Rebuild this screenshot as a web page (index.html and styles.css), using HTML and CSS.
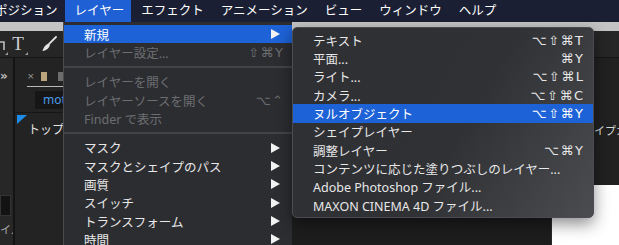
FILE: index.html
```html
<!DOCTYPE html>
<html lang="ja">
<head>
    <meta charset="UTF-8">
    <meta name="viewport" content="width=device-width, initial-scale=1.0">
    <title>レイヤー &gt; 新規</title>
    <link rel="stylesheet" href="styles.css">
</head>
<body>
    <div class="menubar">
        <span class="menubar-item first">コンポジション</span>
        <span class="menubar-item active">レイヤー</span>
        <span class="menubar-item">エフェクト</span>
        <span class="menubar-item">アニメーション</span>
        <span class="menubar-item">ビュー</span>
        <span class="menubar-item">ウィンドウ</span>
        <span class="menubar-item">ヘルプ</span>
    </div>

    <div class="app">
        <div class="titlebar"></div>

        <div class="toolbar">
            <span class="tool tool-edge grouped">
                <svg viewBox="0 0 16 16" width="16" height="16"><path d="M2 6 L14 6 L14 14" fill="none" stroke="#bdbdbd" stroke-width="1.6"/></svg>
            </span>
            <span class="tool tool-type grouped">T</span>
            <span class="tool tool-brush">
                <svg viewBox="0 0 16 16" width="16" height="16">
                    <path d="M15 1 L8.6 7.4" stroke="#e2e2e2" stroke-width="1.8" stroke-linecap="round"/>
                    <path d="M7.6 7.2 L9 8.6 C8.6 11.6 6 14.6 1.4 15 C2.2 13.4 3 9.4 7.6 7.2 Z" fill="#e2e2e2"/>
                </svg>
            </span>
        </div>

        <div class="workspace">
            <div class="dock">
                <span class="dock-more">»</span>
                <span class="dock-field"></span>
                <span class="dock-label">イ.</span>
            </div>

            <div class="project">
                <div class="project-tabs">
                    <span class="tab-close">×</span>
                    <span class="tab-swatch"></span>
                    <span class="tab-swatch other"></span>
                </div>
                <div class="project-search">
                    <span class="search-field">motion</span>
                </div>
                <div class="project-item">
                    <span class="item-mark"></span>
                    <span class="item-name">トップビュー</span>
                </div>
            </div>

            <div class="viewer"></div>

            <div class="side">
                <div class="side-panel"><span class="side-label">シェイプカラー</span></div>
                <div class="side-canvas"></div>
            </div>
        </div>
    </div>

    <!-- レイヤー menu -->
    <div class="menu layer-menu">
        <div class="item selected"><span class="label">新規</span><span class="arrow"></span></div>
        <div class="item disabled"><span class="label">レイヤー設定...</span><span class="keys">⇧⌘Y</span></div>
        <div class="sep"></div>
        <div class="item disabled"><span class="label">レイヤーを開く</span></div>
        <div class="item disabled"><span class="label">レイヤーソースを開く</span><span class="keys">⌥⌃</span></div>
        <div class="item disabled"><span class="label">Finder で表示</span></div>
        <div class="sep"></div>
        <div class="item"><span class="label">マスク</span><span class="arrow"></span></div>
        <div class="item"><span class="label">マスクとシェイプのパス</span><span class="arrow"></span></div>
        <div class="item"><span class="label">画質</span><span class="arrow"></span></div>
        <div class="item"><span class="label">スイッチ</span><span class="arrow"></span></div>
        <div class="item"><span class="label">トランスフォーム</span><span class="arrow"></span></div>
        <div class="item"><span class="label">時間</span><span class="arrow"></span></div>
    </div>

    <!-- 新規 submenu -->
    <div class="menu sub-menu">
        <div class="item"><span class="label">テキスト</span><span class="keys">⌥⇧⌘T</span></div>
        <div class="item"><span class="label">平面...</span><span class="keys">⌘Y</span></div>
        <div class="item"><span class="label">ライト...</span><span class="keys">⌥⇧⌘L</span></div>
        <div class="item"><span class="label">カメラ...</span><span class="keys">⌥⇧⌘C</span></div>
        <div class="item selected"><span class="label">ヌルオブジェクト</span><span class="keys">⌥⇧⌘Y</span></div>
        <div class="item"><span class="label">シェイプレイヤー</span></div>
        <div class="item"><span class="label">調整レイヤー</span><span class="keys">⌥⌘Y</span></div>
        <div class="item"><span class="label">コンテンツに応じた塗りつぶしのレイヤー...</span></div>
        <div class="item"><span class="label">Adobe Photoshop ファイル...</span></div>
        <div class="item"><span class="label">MAXON CINEMA 4D ファイル...</span></div>
    </div>
</body>
</html>
```

FILE: styles.css
```css
* {
    box-sizing: border-box;
}
body {
    margin: 0;
    width: 619px;
    height: 245px;
    overflow: hidden;
    background-color: #1e1e1e;
    font-family: "Noto Sans", "Noto Sans CJK JP", sans-serif;
    font-size: 12.5px;
    color: #e8e8e8;
}

/* system menu bar */
.menubar {
    display: flex;
    height: 22px;
    line-height: 22px;
    background-color: #1b1f33;
    color: #fff;
    white-space: nowrap;
    overflow: hidden;
}
.menubar-item {
    padding: 0 7px 0 10px;
}
.menubar-item.first {
    margin-left: -40px;
}
.menubar-item.active {
    background-color: #1f60d4;
}

/* application window behind the menus */
.app {
    display: flex;
    flex-direction: column;
    height: 223px;
}
.titlebar {
    height: 9px;
    background-color: #c4c4c4;
}
.toolbar {
    display: flex;
    align-items: center;
    height: 27px;
    background-color: #262626;
    border-bottom: 1px solid #151515;
}
.tool {
    position: relative;
    display: flex;
    align-items: center;
    justify-content: center;
    width: 16px;
    height: 18px;
}
.tool.grouped::after {
    content: "";
    position: absolute;
    right: -2px;
    bottom: -2px;
    border-left: 3px solid transparent;
    border-bottom: 3px solid #9a9a9a;
}
.tool-edge {
    margin-left: -10px;
}
.tool-type {
    margin-left: 4px;
    font-family: "Liberation Serif", serif;
    font-size: 19px;
    color: #cfcfcf;
}
.tool-brush {
    margin-left: 15px;
}

.workspace {
    flex: 1;
    display: flex;
}
.dock {
    display: flex;
    flex-direction: column;
    width: 15px;
    background-color: #272727;
    border-right: 2px solid #141414;
    overflow: hidden;
}
.dock-more {
    margin-top: 10px;
    height: 16px;
    line-height: 16px;
    font-family: "DejaVu Sans", sans-serif;
    font-size: 12px;
    font-weight: bold;
    color: #bdbdbd;
}
.dock-field {
    margin-top: auto;
    width: 11px;
    height: 21px;
    background-color: #131313;
    border: 1px solid #333;
}
.dock-label {
    margin: 6px 0 7px;
    height: 16px;
    line-height: 16px;
    font-size: 11px;
    color: #a8a8a8;
    white-space: nowrap;
}

.project {
    width: 49px;
    background-color: #232323;
    overflow: hidden;
}
.project-tabs {
    display: flex;
    align-items: flex-end;
    height: 29px;
    margin-left: 12px;
    padding-bottom: 5px;
    border-bottom: 1px solid #b8b8b8;
}
.tab-close {
    width: 6px;
    margin-right: 8px;
    font-family: "DejaVu Sans", sans-serif;
    font-size: 9px;
    line-height: 10px;
    color: #9a9a9a;
}
.tab-swatch {
    width: 9px;
    height: 9px;
    background-color: #bba57c;
}
.tab-swatch.other {
    margin-left: 11px;
    background-color: #6d6d6d;
}
.project-search {
    height: 26px;
    padding: 4px 0 0 20px;
    border-bottom: 1px solid #161616;
}
.search-field {
    display: block;
    height: 18px;
    padding-left: 8px;
    line-height: 18px;
    background-color: #161616;
    font-size: 12px;
    color: #4b9be6;
    white-space: nowrap;
}
.project-item {
    display: flex;
    align-items: flex-start;
    white-space: nowrap;
}
.item-mark {
    margin: 2px 1px 0 2px;
    width: 0;
    height: 0;
    border-top: 9px solid #1d8ce8;
    border-right: 10px solid transparent;
}
.item-name {
    margin-top: 9px;
    line-height: 16px;
    font-size: 12px;
    color: #e2e2e2;
}

.viewer {
    flex: 1;
    background-color: #1d1d1d;
    border-right: 1px solid #2a2a2a;
}
.side {
    display: flex;
    flex-direction: column;
    width: 67px;
}
.side-panel {
    height: 127px;
    padding: 64px 0 0 20px;
    background-color: #212121;
    white-space: nowrap;
    overflow: hidden;
}
.side-label {
    font-size: 11px;
    line-height: 16px;
    color: #dcdcdc;
}
.side-canvas {
    flex: 1;
    background-color: #fff;
}

/* drop-down menus */
.menu {
    position: absolute;
    white-space: nowrap;
}
.layer-menu {
    left: 63px;
    top: 22px;
    width: 229px;
    height: 223px;
    overflow: hidden;
    padding-top: 3px;
    background-color: #2c2d31;
    border-left: 1px solid #4a4b4f;
}
.sub-menu {
    left: 292px;
    top: 27px;
    width: 302px;
    padding: 3px 0;
    background: linear-gradient(120deg, #2f3034 0%, #303135 55%, #4a4c50 100%);
    border: 1px solid #4b4c50;
    border-radius: 5px;
    box-shadow: 0 6px 16px rgba(0, 0, 0, 0.45);
}
.item {
    display: flex;
    align-items: center;
    height: 18.33px;
    padding: 0 9px 0 20px;
}
.sub-menu .item {
    padding: 0 10px 0 20px;
}
.item.selected {
    background-color: #1d62d6;
    color: #fff;
}
.item.disabled {
    color: #6c6d71;
}
.keys {
    margin-left: auto;
    font-family: "DejaVu Sans", sans-serif;
    font-size: 13px;
    letter-spacing: 1.5px;
    margin-right: -1.5px;
}
.arrow {
    margin-left: auto;
    margin-right: 3px;
    width: 0;
    height: 0;
    border-left: 9px solid #f2f2f2;
    border-top: 5px solid transparent;
    border-bottom: 5px solid transparent;
}
.sep {
    height: 11px;
    padding-top: 4px;
}
.sep::before {
    content: "";
    display: block;
    height: 2px;
    background-color: #434448;
}
```
